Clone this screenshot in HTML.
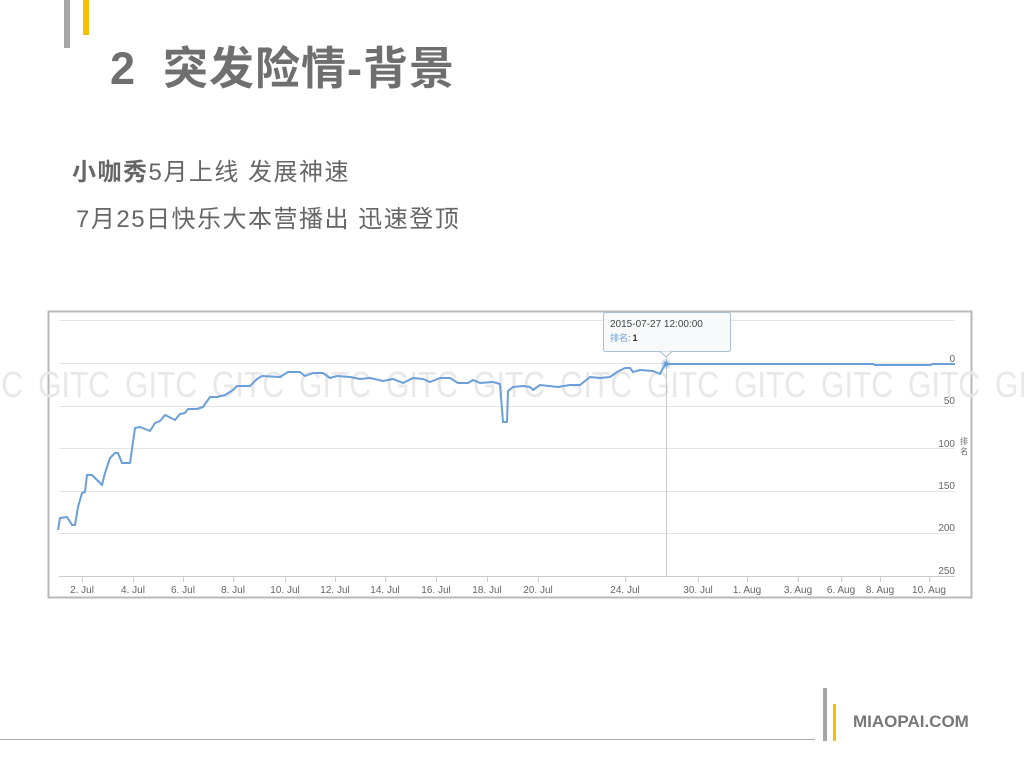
<!DOCTYPE html>
<html><head><meta charset="utf-8"><style>
html,body{margin:0;padding:0;background:#fff;width:1024px;height:768px;overflow:hidden;position:relative;font-family:"Liberation Sans","Noto Sans CJK SC",sans-serif}
.abs{position:absolute}
</style></head><body>
<div class="abs" style="left:64px;top:0;width:6px;height:48px;background:#a6a6a6"></div>
<div class="abs" style="left:83px;top:0;width:6px;height:35px;background:#f5c000"></div>
<div class="abs" style="left:110px;top:41px;font-size:45px;font-weight:bold;color:#6f6f6f;white-space:nowrap;line-height:56px;letter-spacing:1px">2&nbsp; 突发险情-背景</div>
<div class="abs" style="left:72px;top:157px;font-size:24px;color:#666;white-space:nowrap;line-height:32px;letter-spacing:1.5px"><b>小咖秀</b>5月上线 发展神速</div>
<div class="abs" style="left:76px;top:204px;font-size:24px;color:#666;white-space:nowrap;line-height:32px;letter-spacing:1.5px">7月25日快乐大本营播出 迅速登顶</div>

<svg class="abs" style="left:0;top:0" width="1024" height="768" xmlns="http://www.w3.org/2000/svg">
<rect x="48.5" y="311.5" width="923" height="286" fill="#fff" stroke="#b8b8b8" stroke-width="2"/>
<g stroke="#e4e4e4" stroke-width="1">
<line x1="59" y1="320.5" x2="955" y2="320.5"/>
<line x1="59" y1="363.5" x2="955" y2="363.5"/>
<line x1="59" y1="406.5" x2="955" y2="406.5"/>
<line x1="59" y1="448.5" x2="955" y2="448.5"/>
<line x1="59" y1="491.5" x2="955" y2="491.5"/>
<line x1="59" y1="533.5" x2="955" y2="533.5"/>
</g>
<line x1="59" y1="576.5" x2="955" y2="576.5" stroke="#ccc"/>
<g stroke="#ccc">
<line x1="82.5" y1="576" x2="82.5" y2="582"/><line x1="133.5" y1="576" x2="133.5" y2="582"/><line x1="183.5" y1="576" x2="183.5" y2="582"/><line x1="233.5" y1="576" x2="233.5" y2="582"/><line x1="285.5" y1="576" x2="285.5" y2="582"/><line x1="335.5" y1="576" x2="335.5" y2="582"/><line x1="385.5" y1="576" x2="385.5" y2="582"/><line x1="436.5" y1="576" x2="436.5" y2="582"/><line x1="487.5" y1="576" x2="487.5" y2="582"/><line x1="538.5" y1="576" x2="538.5" y2="582"/><line x1="625.5" y1="576" x2="625.5" y2="582"/><line x1="698.5" y1="576" x2="698.5" y2="582"/><line x1="747.5" y1="576" x2="747.5" y2="582"/><line x1="798.5" y1="576" x2="798.5" y2="582"/><line x1="841.5" y1="576" x2="841.5" y2="582"/><line x1="880.5" y1="576" x2="880.5" y2="582"/><line x1="929.5" y1="576" x2="929.5" y2="582"/>
</g>
<g font-family="Liberation Sans, sans-serif" font-size="10" fill="#666" text-anchor="middle">
<text x="82" y="593">2. Jul</text><text x="133" y="593">4. Jul</text><text x="183" y="593">6. Jul</text><text x="233" y="593">8. Jul</text><text x="285" y="593">10. Jul</text><text x="335" y="593">12. Jul</text><text x="385" y="593">14. Jul</text><text x="436" y="593">16. Jul</text><text x="487" y="593">18. Jul</text><text x="538" y="593">20. Jul</text><text x="625" y="593">24. Jul</text><text x="698" y="593">30. Jul</text><text x="747" y="593">1. Aug</text><text x="798" y="593">3. Aug</text><text x="841" y="593">6. Aug</text><text x="880" y="593">8. Aug</text><text x="929" y="593">10. Aug</text>
</g>
<g font-family="Liberation Sans, sans-serif" font-size="10" fill="#666" text-anchor="end">
<text x="955" y="362">0</text><text x="955" y="404">50</text><text x="955" y="447">100</text><text x="955" y="489">150</text><text x="955" y="531">200</text><text x="955" y="574">250</text>
</g>
<text x="960" y="444" font-family="Noto Sans CJK SC, sans-serif" font-size="8" fill="#666">排</text>
<text x="960" y="454" font-family="Noto Sans CJK SC, sans-serif" font-size="8" fill="#666">名</text>

<g font-family="Liberation Sans, sans-serif" font-size="36" fill="#e8e8e8">
<text x="-49" y="397" textLength="72" lengthAdjust="spacingAndGlyphs">GITC</text><text x="38" y="397" textLength="72" lengthAdjust="spacingAndGlyphs">GITC</text><text x="125" y="397" textLength="72" lengthAdjust="spacingAndGlyphs">GITC</text><text x="212" y="397" textLength="72" lengthAdjust="spacingAndGlyphs">GITC</text><text x="299" y="397" textLength="72" lengthAdjust="spacingAndGlyphs">GITC</text><text x="386" y="397" textLength="72" lengthAdjust="spacingAndGlyphs">GITC</text><text x="473" y="397" textLength="72" lengthAdjust="spacingAndGlyphs">GITC</text><text x="560" y="397" textLength="72" lengthAdjust="spacingAndGlyphs">GITC</text><text x="647" y="397" textLength="72" lengthAdjust="spacingAndGlyphs">GITC</text><text x="734" y="397" textLength="72" lengthAdjust="spacingAndGlyphs">GITC</text><text x="821" y="397" textLength="72" lengthAdjust="spacingAndGlyphs">GITC</text><text x="908" y="397" textLength="72" lengthAdjust="spacingAndGlyphs">GITC</text><text x="995" y="397" textLength="72" lengthAdjust="spacingAndGlyphs">GITC</text>
</g>

<line x1="666.5" y1="357" x2="666.5" y2="576" stroke="#c8c8c8"/>
<polyline fill="none" stroke="#6a9fd8" stroke-width="2" stroke-linejoin="round" points="58,530 60,518 67,517 72,525 75,525 78,507 82,493 85,492 87,475 92,475 102,485 105,473 110,458 115,453 118,453 122,463 130,463 135,428 140,427 150,431 155,423 160,421 165,415 175,420 180,414 185,413 188,409 197,409 203,407 210,397 217,397 225,395 233,390 237,386 250,386 257,379 262,376 280,377 288,372 300,372 305,376 313,373 323,373 330,378 337,376 350,377 360,379 370,378 383,381 393,379 403,383 413,378 423,379 430,382 440,378 450,378 458,383 468,383 473,380 480,383 493,382 500,384 503,422 507,422 508,391 513,387 523,386 530,387 533,390 540,385 558,387 570,385 580,385 590,377 600,378 610,377 617,372 625,368 630,368 633,372 640,370 653,371 660,374 663,368 666,364 873,364 875,365 930,365 933,364 955,364"/>
<circle cx="666" cy="364" r="5" fill="#6a9fd8" opacity="0.3"/>
<circle cx="666" cy="364" r="2.5" fill="#6a9fd8"/>
<rect x="603.5" y="312.5" width="127" height="39" fill="#f8f9fb" stroke="#a9bfd6" rx="2"/>
<path d="M660 351.5 L666 357 L672 351.5" fill="#f8f9fb" stroke="#a9bfd6"/>
<text x="610" y="327" font-family="Liberation Sans, sans-serif" font-size="10" fill="#444">2015-07-27 12:00:00</text>
<text x="610" y="341" font-family="Noto Sans CJK SC, sans-serif" font-size="9" fill="#6a9fd8">排名: <tspan fill="#333" font-weight="bold" font-family="Liberation Sans, sans-serif">1</tspan></text>
</svg>

<div class="abs" style="left:0;top:739px;width:815px;height:1px;background:#aaa"></div>
<div class="abs" style="left:823px;top:688px;width:4px;height:53px;background:#a6a6a6"></div>
<div class="abs" style="left:833px;top:704px;width:3px;height:37px;background:#f5c000"></div>
<div class="abs" style="left:853px;top:712px;font-size:17px;font-weight:bold;color:#777;line-height:20px">MIAOPAI.COM</div>
</body></html>
